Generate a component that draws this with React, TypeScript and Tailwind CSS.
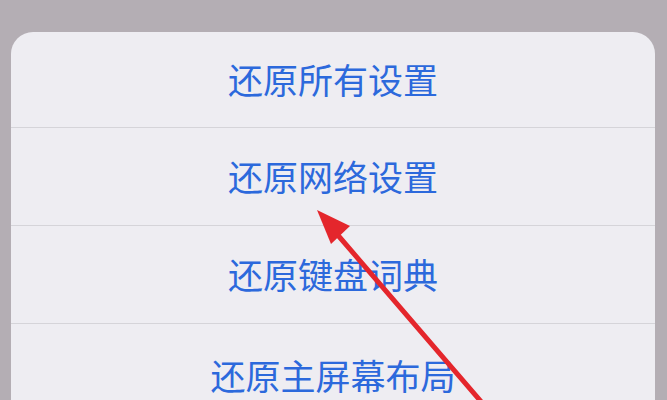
import React from 'react';

const ITEMS = ['还原所有设置', '还原网络设置', '还原键盘词典', '还原主屏幕布局'];

export default function App() {
  return (
    <div
      className="relative h-[400px] w-[667px] overflow-hidden bg-[#b4aeb4] pt-[32px] pl-[11px] pr-[12px]"
      style={{ fontFamily: '"Noto Sans CJK SC", "Noto Sans", sans-serif' }}
    >
      <div className="h-[420px] rounded-t-[22px] bg-[#eeedf2]">
        {ITEMS.map((label, i) => (
          <div
            key={label}
            className={`flex items-center justify-center border-b border-[#d5d4d9] text-[35px] text-[#2c69dc] ${
              i === 0 ? 'h-[96px]' : 'h-[98px]'
            } ${i === 3 ? 'pt-[6px]' : ''}`}
          >
            {label}
          </div>
        ))}
      </div>

      {/* red annotation arrow */}
      <svg className="absolute left-0 top-0" width="667" height="400" viewBox="0 0 667 400">
        <line x1="330" y1="226" x2="490" y2="412" stroke="#e4262c" strokeWidth="5" strokeLinecap="round" />
        <polygon points="317,210 350,226 331,244" fill="#e4262c" />
      </svg>
    </div>
  );
}
